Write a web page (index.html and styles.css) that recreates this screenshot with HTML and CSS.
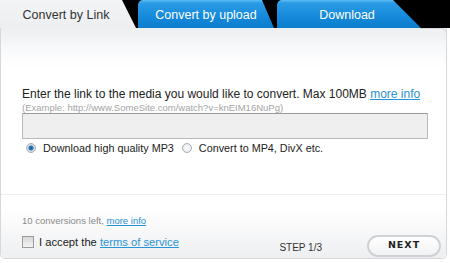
FILE: index.html
```html
<!DOCTYPE html>
<html lang="en">
<head>
    <meta charset="UTF-8">
    <title>Convert</title>
    <link rel="stylesheet" href="styles.css">
</head>
<body>
    <div class="tabs">
        <div class="tab tab-link active">Convert by Link</div>
        <div class="tab tab-upload">Convert by upload</div>
        <div class="tab tab-download">Download</div>
    </div>

    <div class="panel">
        <div class="panel-body">
            <p class="intro">Enter the link to the media you would like to convert. Max 100MB <a href="#">more info</a></p>
            <p class="example">(Example: http://www.SomeSite.com/watch?v=knEIM16NuPg)</p>
            <input class="url-input" type="text">
            <div class="options">
                <label class="option"><span class="radio checked"></span>Download high quality MP3</label>
                <label class="option"><span class="radio"></span>Convert to MP4, DivX etc.</label>
            </div>
        </div>
        <div class="panel-footer">
            <p class="left">10 conversions left, <a href="#">more info</a></p>
            <div class="actions">
                <label class="accept"><span class="checkbox"></span><span>I accept the <a href="#">terms of service</a></span></label>
                <span class="step">STEP 1/3</span>
                <button class="next">NEXT</button>
            </div>
        </div>
    </div>
</body>
</html>
```

FILE: styles.css
```css
body {
    margin: 0;
    width: 450px;
    height: 263px;
    background: #fff;
    font-family: "Liberation Sans", Arial, sans-serif;
    color: #222;
    overflow: hidden;
}

a {
    color: #2a93d5;
}

.tabs {
    display: flex;
    height: 28px;
    background: #000;
}

.tab {
    height: 28px;
    line-height: 30px;
    font-size: 12.5px;
    text-align: center;
    color: #fff;
    background: linear-gradient(#5dbdf2 0, #2a9be6 3px, #1589da 60%, #0c7ccc 100%);
}

.tab-link {
    width: 136px;
    color: #333;
    background: linear-gradient(#f3f4f5, #eceef0);
    clip-path: polygon(0 0, 122px 0, 100% 100%, 0 100%);
    padding-right: 4px;
    box-sizing: border-box;
}

.tab-upload {
    width: 136px;
    margin-left: 2px;
    border-top-left-radius: 5px;
    clip-path: polygon(0 0, 124px 0, 100% 100%, 0 100%);
}

.tab-download {
    width: 144px;
    margin-left: 3px;
    border-top-left-radius: 5px;
    clip-path: polygon(0 0, 116px 0, 100% 100%, 0 100%);
    padding-right: 4px;
    box-sizing: border-box;
}

.panel {
    width: 447px;
    height: 231px;
    box-sizing: border-box;
    border: 1px solid #d6d8db;
    border-top: 0;
    border-radius: 0 0 5px 5px;
    display: flex;
    flex-direction: column;
    background: linear-gradient(#eceef0 0, #f8f9fa 20px, #fff 40px);
    position: relative;
}

.panel::before {
    content: "";
    position: absolute;
    top: 0;
    right: -1px;
    width: 26px;
    height: 8px;
    border-top: 1px solid #d6d8db;
    border-right: 1px solid #d6d8db;
    border-top-right-radius: 6px;
}

.panel-body {
    height: 166px;
    box-sizing: border-box;
    padding: 58px 0 0 21px;
}

.intro {
    margin: 0;
    font-size: 12px;
    line-height: 16px;
}

.example {
    margin: 0;
    font-size: 9.5px;
    line-height: 11px;
    color: #a4a4a4;
}

.url-input {
    display: block;
    width: 406px;
    height: 26px;
    box-sizing: border-box;
    margin: 0;
    border: 1px solid #b9b9b9;
    border-top-color: #9a9a9a;
    background: #efefef;
}

.options {
    display: flex;
    margin: 1px 0 0 4px;
    font-size: 10.8px;
    line-height: 16px;
}

.option {
    display: flex;
    align-items: center;
    margin-right: 8px;
}

.radio {
    width: 10px;
    height: 10px;
    box-sizing: border-box;
    border: 1px solid #a9adb2;
    border-radius: 50%;
    margin-right: 7px;
    background: radial-gradient(#fff, #dfe2e6);
}

.radio.checked {
    background: radial-gradient(#1e5f93 0, #2d78b3 2px, #cfd9e3 3px, #eef1f4 5px);
}

.panel-footer {
    flex: 1;
    padding: 19px 5px 0 21px;
    border-top: 1px solid #eceef0;
    background: linear-gradient(#fff 20%, #eeeff1);
    border-radius: 0 0 5px 5px;
}

.left {
    margin: 0 0 7px;
    font-size: 9.5px;
    line-height: 14px;
    color: #8a8a8a;
}

.actions {
    display: flex;
    align-items: center;
}

.accept {
    align-self: flex-start;
    display: flex;
    align-items: center;
    font-size: 11.2px;
    line-height: 14px;
}

.checkbox {
    width: 10px;
    height: 10px;
    border: 1px solid #9c9c9c;
    background: linear-gradient(#d8d8d8, #f4f4f4);
    margin-right: 5px;
}

.step {
    margin-left: auto;
    margin-right: 45px;
    font-size: 10px;
    color: #333;
    padding-top: 2px;
}

.next {
    width: 74px;
    height: 22px;
    border: 2px solid #cfd1d4;
    border-radius: 11px;
    background: linear-gradient(#fff, #f1f2f3);
    font-family: "DejaVu Sans", sans-serif;
    font-weight: bold;
    font-size: 9.5px;
    letter-spacing: 1px;
    color: #222;
    padding: 0 0 3px;
    cursor: pointer;
}
```
